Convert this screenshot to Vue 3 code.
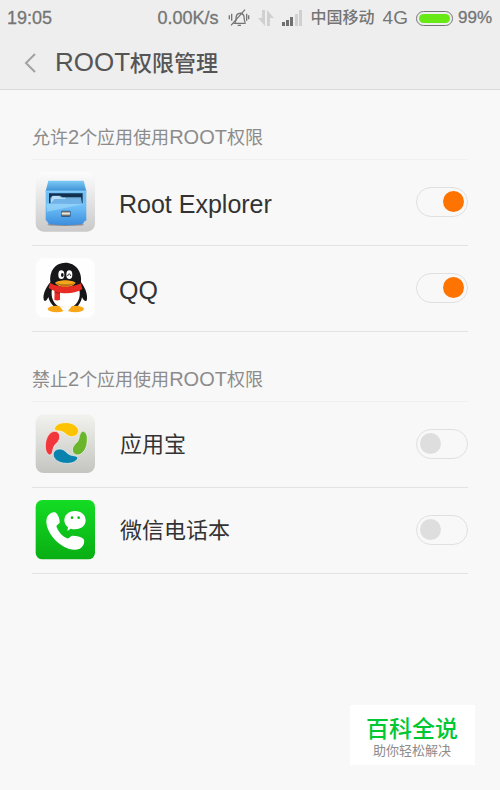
<script setup>
import { reactive } from 'vue';

const sections = reactive([
  {
    id: 'allowed',
    title: [
      { text: '允许' },
      { text: '2', latin: true },
      { text: '个应用使用' },
      { text: 'ROOT', latin: true },
      { text: '权限' },
    ],
    apps: [
      { id: 'explorer', name: 'Root Explorer', latin: true, enabled: true },
      { id: 'qq', name: 'QQ', latin: true, enabled: true },
    ],
  },
  {
    id: 'denied',
    title: [
      { text: '禁止' },
      { text: '2', latin: true },
      { text: '个应用使用' },
      { text: 'ROOT', latin: true },
      { text: '权限' },
    ],
    apps: [
      { id: 'store', name: '应用宝', enabled: false },
      { id: 'phonebook', name: '微信电话本', enabled: false },
    ],
  },
]);
</script>

<template>
  <div class="screen">
    <header class="top">
      <div class="status">
        <span class="time">19:05</span>
        <span class="speed">0.00K/s</span>
        <!-- Silent mode -->
        <svg class="bell" width="22" height="20" viewBox="26 22 66 60" fill="none" stroke="#757575" stroke-width="4">
          <path d="M42 68h37M47 66c5-6 2-13 4-20 2-9 17-12 22-2 3 7 0 15 5 22" />
          <path d="M55 74h10M77 27L35 74" />
          <path d="M30 44v12M37 39v21M82 39v21M88 44v12" />
        </svg>
        <!-- Data traffic -->
        <svg class="traffic" width="16" height="16" viewBox="0 0 16 16" fill="#d0d0d0">
          <path d="M4 0h3v16L0 8h4zM9 16V0l7 8h-4v8z" />
        </svg>
        <svg class="signal" width="20" height="16" viewBox="0 0 20 16">
          <path d="M0 12h3v4H0zM4 10h3v6H4zM8 7h3v9H8z" fill="#707070" />
          <path d="M13 4h3v12h-3zM17 0h3v16h-3z" fill="#d0d0d0" />
        </svg>
        <span class="carrier">中国移动</span>
        <span class="network">4G</span>
        <span class="battery"><span class="charge"></span></span>
        <span class="percent">99%</span>
      </div>
      <div class="bar">
        <button class="back" type="button" aria-label="返回">
          <svg width="12" height="20" viewBox="0 0 12 20" fill="none" stroke="#a2a2a2" stroke-width="2">
            <path d="M11 1L2 10l9 9" />
          </svg>
        </button>
        <h1><span class="latin">ROOT</span>权限管理</h1>
      </div>
    </header>

    <main>
      <section v-for="section in sections" :key="section.id">
        <h2>
          <span v-for="part in section.title" :key="part.text" :class="{ latin: part.latin }">{{ part.text }}</span>
        </h2>
        <ul>
          <li v-for="app in section.apps" :key="app.id">
            <svg v-if="app.id === 'explorer'" class="icon" viewBox="30 22 180 180">
              <defs>
                <linearGradient id="plate" x1="0" y1="0" x2="0" y2="1">
                  <stop offset="0" stop-color="#fcfcfc" />
                  <stop offset="1" stop-color="#c9c9c9" />
                </linearGradient>
                <linearGradient id="lid" x1="0" y1="0" x2="0" y2="1">
                  <stop offset="0" stop-color="#7ccbf6" />
                  <stop offset="1" stop-color="#3c8fd5" />
                </linearGradient>
                <linearGradient id="drawer" x1="0" y1="0" x2="0" y2="1">
                  <stop offset="0" stop-color="#6fbdf4" />
                  <stop offset="0.45" stop-color="#6fc0f8" />
                  <stop offset="1" stop-color="#3c8ede" />
                </linearGradient>
                <linearGradient id="handle" x1="0" y1="0" x2="0" y2="1">
                  <stop offset="0" stop-color="#6c665f" />
                  <stop offset="0.5" stop-color="#f5f1e8" />
                  <stop offset="1" stop-color="#4c4c4c" />
                </linearGradient>
              </defs>
              <rect x="32" y="23" width="178" height="178" rx="24" fill="url(#plate)" />
              <ellipse cx="122" cy="180" rx="55" ry="4" fill="#858b92" />
              <path d="M70 48h106l8 32H62z" fill="url(#lid)" />
              <path d="M62 78h122v87c0 3-2 4-5 4l-5 8c-28 5-76 5-104 0l-4-8c-3 0-4-2-4-5z" fill="url(#drawer)" />
              <path d="M62 78h122v5H62z" fill="#84cbf7" />
              <path d="M72 86h101v30H72z" fill="#12314f" />
              <path d="M76 116V99l6-6h23l8 5h55l3 18z" fill="#72acd9" />
              <path d="M78 106l5-12h19l7 5h12l2 17H78z" fill="#b8dcf3" />
              <path d="M88 103h75l7 14H76z" fill="#71b4e9" />
              <path d="M65 117h116L66 141z" fill="#a4dafa" opacity="0.6" />
              <rect x="108" y="138" width="29" height="19" rx="4" fill="#325c86" />
              <rect x="110" y="140" width="25" height="14" rx="2" fill="url(#handle)" />
            </svg>

            <svg v-else-if="app.id === 'qq'" class="icon" viewBox="30 26 180 180">
              <rect x="32" y="27" width="178" height="178" rx="24" fill="#fefefe" />
              <path d="M76 99c-4-33 14-59 45-59s51 27 47 59c11 14 20 34 18 50-1 11-10 6-15-5-5 25-22 40-49 40s-46-17-52-41c-5 12-12 16-14 7-3-13 6-36 20-51z" fill="#171719" />
              <path d="M82 116c25 13 56 13 79 0 10 26-3 60-39 61-34-1-48-33-40-61z" fill="#fff" />
              <ellipse cx="95" cy="179" rx="27" ry="10" fill="#f8a719" />
              <ellipse cx="150" cy="179" rx="27" ry="10" fill="#f8a719" />
              <path d="M101 167c12 8 30 8 42 0l-14 18h-14z" fill="#fff" />
              <ellipse cx="109" cy="76" rx="9" ry="13" fill="#fff" />
              <ellipse cx="133" cy="76" rx="9" ry="13" fill="#fff" />
              <ellipse cx="112" cy="77" rx="4" ry="6" fill="#171719" />
              <path d="M128 80c1-8 8-8 9 0" fill="none" stroke="#171719" stroke-width="3" />
              <path d="M90 101c10-11 52-11 62 0-13 17-49 17-62 0z" fill="#f6a51b" />
              <path d="M91 101c17 5 43 5 60 0-20 14-41 14-60 0z" fill="#b67319" />
              <path d="M75 101c29 15 63 15 93 1l4 17c-19 12-44 15-67 11v21c-5 3-12 3-17 0l1-26c-6-2-12-5-18-9z" fill="#e72d24" />
              <path d="M89 125l16 5v5l-16-5z" fill="#b8201c" />
            </svg>

            <svg v-else-if="app.id === 'store'" class="icon" viewBox="30 28 180 180">
              <defs>
                <linearGradient id="tile" x1="0" y1="0" x2="0" y2="1">
                  <stop offset="0" stop-color="#f2f2ef" />
                  <stop offset="1" stop-color="#c4c4c0" />
                </linearGradient>
              </defs>
              <rect x="32" y="29" width="178" height="176" rx="24" fill="url(#tile)" />
              <g stroke="#f7f7f3" stroke-width="2">
                <path d="M88 73c3-14 19-20 36-19 17 0 30 8 35 18 5 12-4 23-19 24-14 0-18-12-31-16-10-2-19 0-21-7z" fill="#fdc300" />
                <path d="M176 80c13 6 12 25 9 42-5 18-15 27-26 29-13 1-20-12-15-24 5-10 14-12 17-23 3-10 4-25 15-24z" fill="#6bb52d" />
                <path d="M159 160c-6 13-22 17-37 16-19-1-32-10-36-20-5-13 6-24 20-23 14 1 18 13 30 18 9 3 20 1 23 9z" fill="#0883ae" />
                <path d="M73 151c-13-7-14-27-10-43 5-18 15-28 27-28 13 1 17 15 12 26-5 10-14 13-17 24-3 9-2 20-12 21z" fill="#f1373b" />
              </g>
            </svg>

            <svg v-else class="icon" viewBox="30 30 180 180">
              <defs>
                <linearGradient id="green" x1="0" y1="0" x2="0" y2="1">
                  <stop offset="0" stop-color="#14dc24" />
                  <stop offset="1" stop-color="#09ae13" />
                </linearGradient>
              </defs>
              <rect x="32" y="30" width="178" height="178" rx="20" fill="url(#green)" />
              <path d="M70 76c7-9 16-11 23-8 7 6 11 19 11 27 0 9-12 8-9 17 6 15 17 27 31 33 8 2 9-9 17-8 11 0 25 3 33 10 5 11-2 24-12 29-13 6-31 3-47-6-22-12-40-31-49-55-5-14-6-29 2-39z" fill="#fff" />
              <path d="M150 63c19 0 32 12 32 28s-13 27-32 27c-5 0-9-1-13-2l-10 7 2-11c-7-5-11-12-11-21 0-16 13-28 32-28z" fill="#fff" />
              <circle cx="141" cy="83" r="4" fill="#10bd1d" />
              <circle cx="161" cy="83" r="4" fill="#10bd1d" />
            </svg>

            <label :for="app.id" :class="{ latin: app.latin }">{{ app.name }}</label>
            <input :id="app.id" v-model="app.enabled" class="switch" type="checkbox" role="switch" />
          </li>
        </ul>
      </section>
    </main>

    <aside class="badge">
      <strong>百科全说</strong>
      <span>助你轻松解决</span>
    </aside>
  </div>
</template>

<style>
body {
  background: #f8f8f8;
}
</style>

<style scoped>
.screen {
  position: relative;
  min-height: 100vh;
  background: #f8f8f8;
  font-family: "Liberation Sans", "Noto Sans CJK SC", sans-serif;
  color: #333;
}

.top {
  background: #eee;
  border-bottom: 1px solid #d9d9d9;
}

.status {
  display: flex;
  align-items: center;
  height: 36px;
  padding: 0 8px 0 7px;
  color: #757575;
  font-size: 18px;
}

.time {
  margin-right: auto;
}

.time,
.speed,
.percent {
  -webkit-text-stroke: 0.3px;
}

.bell {
  margin-left: 9px;
}

.traffic,
.signal {
  margin-left: 8px;
}

.carrier {
  margin-left: 9px;
  font-size: 16px;
  font-weight: 500;
  line-height: 18px;
}

.network {
  margin-left: 8px;
  font-size: 19px;
}

.battery {
  box-sizing: border-box;
  width: 37px;
  height: 15px;
  margin: 0 5px 0 8px;
  padding: 2px;
  border: 1px solid #757575;
  border-radius: 8px;
}

.charge {
  display: block;
  height: 100%;
  border-radius: 5px;
  background: #68e814;
}

.percent {
  font-size: 17px;
}

.bar {
  display: flex;
  align-items: center;
  height: 53px;
  padding-left: 24px;
}

.back {
  display: flex;
  padding: 0;
  border: 0;
  background: none;
}

h1 {
  margin: 0 0 0 19px;
  color: #555;
  font-size: 22px;
  font-weight: 500;
  line-height: 32px;
}

h1 .latin {
  font-size: 26px;
  font-weight: 400;
}

main {
  padding: 0 32px;
}

h2 {
  margin: 0;
  padding: 36px 0 10px;
  border-bottom: 1px solid #f0f0f0;
  color: #8c8c8c;
  font-size: 18px;
  font-weight: 400;
  line-height: 22px;
}

h2 .latin {
  font-size: 20px;
}

ul {
  margin: 0;
  padding: 0;
  list-style: none;
}

li {
  display: flex;
  align-items: center;
  height: 83px;
  padding: 0 0 2px 3px;
  border-bottom: 1px solid #e2e2e2;
}

.icon {
  width: 60px;
  height: 60px;
}

label {
  flex: 1;
  padding: 2px 0 0 25px;
  font-size: 22px;
  line-height: 30px;
}

label.latin {
  padding: 4px 0 0 24px;
  font-size: 25px;
}

.switch {
  appearance: none;
  display: flex;
  align-items: center;
  box-sizing: border-box;
  width: 52px;
  height: 30px;
  margin: 0;
  padding: 0 3px;
  border: 1px solid #e0e0e0;
  border-radius: 15px;
}

.switch::before {
  content: "";
  width: 21px;
  height: 21px;
  border-radius: 50%;
  background: #dedede;
}

.switch:checked {
  justify-content: flex-end;
}

.switch:checked::before {
  background: #ff7300;
}

.badge {
  position: absolute;
  right: 25px;
  bottom: 25px;
  display: flex;
  flex-direction: column;
  align-items: center;
  padding: 10px 17px 6px 16px;
  background: #fff;
}

.badge strong {
  color: #00c832;
  font-size: 23px;
  font-weight: 500;
  line-height: 28px;
}

.badge span {
  color: #8c8c8c;
  font-size: 13px;
  line-height: 16px;
}
</style>
